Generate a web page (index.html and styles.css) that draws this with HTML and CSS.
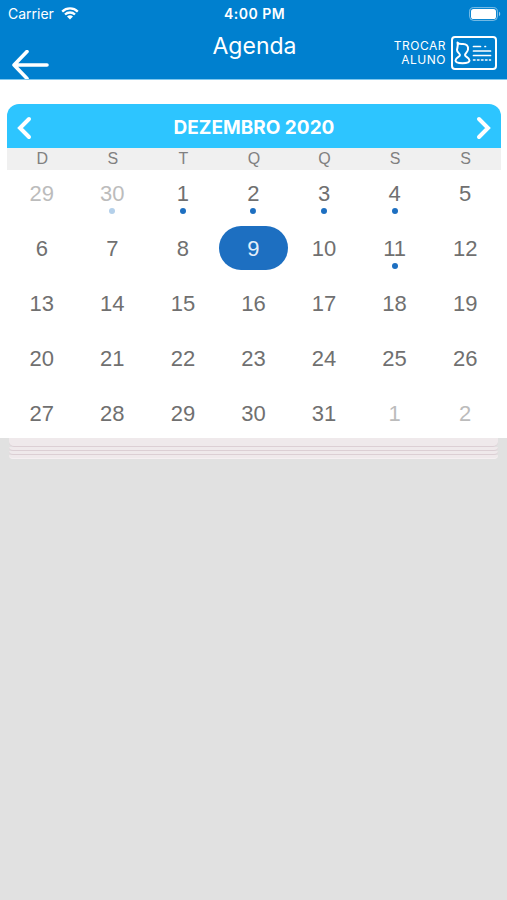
FILE: index.html
```html
<!DOCTYPE html>
<html lang="pt-BR">
<head>
<meta charset="utf-8">
<meta name="viewport" content="width=device-width, initial-scale=1">
<title>Agenda</title>
<link rel="stylesheet" href="styles.css">
</head>
<body>
<header class="topbar">
  <div class="status">
    <span class="carrier">Carrier
      <svg class="wifi" viewBox="0 0 18 13" aria-hidden="true"><path d="M1.200 4.600a11.200 11.200 0 0 1 15.600 0M4 7.500a7.200 7.200 0 0 1 10 0" fill="none" stroke="currentColor" stroke-width="2.300"/><path d="M6 9.600a4.400 4.400 0 0 1 6 0l-3 3z" fill="currentColor"/></svg>
    </span>
    <span class="time">4:00 PM</span>
    <svg class="battery" viewBox="0 0 32 14" aria-hidden="true"><rect x=".6" y=".6" width="27.8" height="12.8" rx="4" fill="none" stroke="currentColor" stroke-opacity=".5"/><rect x="2" y="2" width="25" height="10" rx="2.6" fill="currentColor"/><path d="M30 4.800c1.600.6 1.600 3.800 0 4.400z" fill="currentColor" fill-opacity=".6"/></svg>
  </div>
  <div class="nav">
    <button class="back" type="button" aria-label="Voltar">
      <svg viewBox="0 0 38 30" aria-hidden="true"><path d="M35 15H2M15 1.500 2 15l13 13.500" fill="none" stroke="currentColor" stroke-width="3.600" stroke-linecap="round" stroke-linejoin="round"/></svg>
    </button>
    <h1>Agenda</h1>
    <button class="switch" type="button">
      <span>TROCAR<br>ALUNO</span>
      <svg viewBox="0 0 46 34" aria-hidden="true" fill="none" stroke="currentColor" stroke-linecap="round" stroke-linejoin="round"><rect x="1" y="1" width="44" height="32" rx="3" stroke-width="2"/><path d="M6.500 6.500C7.500 8.500 9.500 8 12 8c3.500 0 5.500 2 5 5.500-.3 2.500-3 4-3 5.500 0 2 4.500 2.500 4.500 5.500 0 2-3 2.700-7 2.700s-7-.7-7-2.700c0-3 4.500-3.500 4.500-5.500 0-1.500-3-2.500-3-5 0-2 1.500-4 .5-7.500z" stroke-width="2"/><path d="M22.500 10.500h7M34 10.500h.5M22.500 15h17M22.500 19.500h17" stroke-width="1.700"/><path d="M22.500 24h17" stroke-width="1.600" stroke-dasharray="1.500 2.500"/></svg>
    </button>
  </div>
</header>
<main>
  <section class="calendar">
    <div class="month">
      <button type="button" aria-label="Mês anterior"><svg viewBox="0 0 16 24" aria-hidden="true"><path d="M13 3 4 12l9 9" fill="none" stroke="currentColor" stroke-width="4" stroke-linecap="round"/></svg></button>
      <h2>DEZEMBRO 2020</h2>
      <button type="button" aria-label="Próximo mês"><svg viewBox="0 0 16 24" aria-hidden="true"><path d="m3 3 9 9-9 9" fill="none" stroke="currentColor" stroke-width="4" stroke-linecap="round"/></svg></button>
    </div>
    <table>
      <thead><tr><th>D</th><th>S</th><th>T</th><th>Q</th><th>Q</th><th>S</th><th>S</th></tr></thead>
      <tbody>
        <tr><td><button class="out">29</button></td><td><button class="out event">30</button></td><td><button class="event">1</button></td><td><button class="event">2</button></td><td><button class="event">3</button></td><td><button class="event">4</button></td><td><button>5</button></td></tr>
        <tr><td><button>6</button></td><td><button>7</button></td><td><button>8</button></td><td><button class="selected" aria-pressed="true">9</button></td><td><button>10</button></td><td><button class="event">11</button></td><td><button>12</button></td></tr>
        <tr><td><button>13</button></td><td><button>14</button></td><td><button>15</button></td><td><button>16</button></td><td><button>17</button></td><td><button>18</button></td><td><button>19</button></td></tr>
        <tr><td><button>20</button></td><td><button>21</button></td><td><button>22</button></td><td><button>23</button></td><td><button>24</button></td><td><button>25</button></td><td><button>26</button></td></tr>
        <tr><td><button>27</button></td><td><button>28</button></td><td><button>29</button></td><td><button>30</button></td><td><button>31</button></td><td><button class="out">1</button></td><td><button class="out">2</button></td></tr>
      </tbody>
    </table>
  </section>
  <div class="stack" aria-hidden="true"><i></i><i></i><i></i><i></i></div>
</main>
</body>
</html>
```
FILE: styles.css
```css
* { box-sizing: border-box; }

body {
  margin: 0;
  min-height: 100vh;
  background: #e1e1e1;
  font-family: Inter, "Liberation Sans", sans-serif;
}

button {
  margin: 0;
  padding: 0;
  border: 0;
  background: none;
  color: inherit;
  font: inherit;
  cursor: pointer;
}

svg { display: block; }

h1, h2 { margin: 0; }

.topbar {
  background: #0080cf;
  color: #fff;
  border-bottom: 1px solid #80c8ee;
}

.status {
  display: grid;
  grid-template-columns: 1fr auto 1fr;
  align-items: center;
  height: 27px;
  padding: 0 6px 0 8px;
  font-size: 14px;
}

.carrier {
  display: flex;
  align-items: center;
  gap: 7px;
}

.wifi { width: 18px; height: 13px; }

.time { font-size: 14px; font-weight: 600; letter-spacing: 0.5px; }

.battery { width: 32px; height: 14px; justify-self: end; }

.nav {
  display: grid;
  grid-template-columns: 1fr auto 1fr;
  height: 52px;
  padding: 0 10px 0 12px;
  overflow: hidden;
}

.back {
  width: 38px;
  height: 30px;
  margin-top: 23px;
}

h1 {
  margin-top: 5px;
  font-size: 23px;
  line-height: 28px;
  font-weight: 400;
}

.switch {
  display: flex;
  align-items: center;
  justify-self: end;
  gap: 5px;
  height: 34px;
  margin-top: 9px;
  font-size: 12px;
  line-height: 14px;
  letter-spacing: 0.5px;
  text-align: right;
}

.switch svg { width: 46px; height: 34px; }

.calendar {
  padding: 24px 6px 3px 7px;
  background: #fff;
}

.month {
  display: flex;
  align-items: center;
  justify-content: space-between;
  height: 44px;
  padding: 4px 9px 0;
  border-radius: 12px 12px 0 0;
  background: #2dc5ff;
  color: #fff;
}

.month h2 {
  font-size: 19px;
  line-height: 24px;
  font-weight: 700;
}

.month svg { width: 16px; height: 24px; }

table {
  width: 100%;
  table-layout: fixed;
  border-collapse: collapse;
  color: #707070;
}

th {
  height: 22px;
  padding: 0;
  background: #f0f0f0;
  color: #808080;
  font: 400 16px/22px "Liberation Sans", sans-serif;
}

td { padding: 11px 0 0; }

tbody tr:first-child td { padding-top: 1px; }

td button {
  display: block;
  position: relative;
  width: calc(100% - 1px);
  height: 44px;
  padding-top: 2px;
  border-radius: 22px;
  font: 400 22px/42px "Liberation Sans", sans-serif;
}

.out { color: #bcbcbc; }

.event::after {
  content: "";
  position: absolute;
  bottom: 1px;
  left: calc(50% - 3px);
  width: 6px;
  height: 6px;
  border-radius: 50%;
  background: #1d6fc1;
}

.out.event::after { background: #b4d0ea; }

.selected { background: #1d6fc1; color: #e4effa; }

.stack { padding: 0 9px; }

.stack i {
  display: block;
  height: 4px;
  border-bottom: 1px solid #dccfd4;
  border-radius: 0 0 5px 5px;
  background: #efe9eb;
}

.stack i:first-child { height: 9px; }

.stack i:last-child { border-bottom-color: #f5f0f2; }
```
